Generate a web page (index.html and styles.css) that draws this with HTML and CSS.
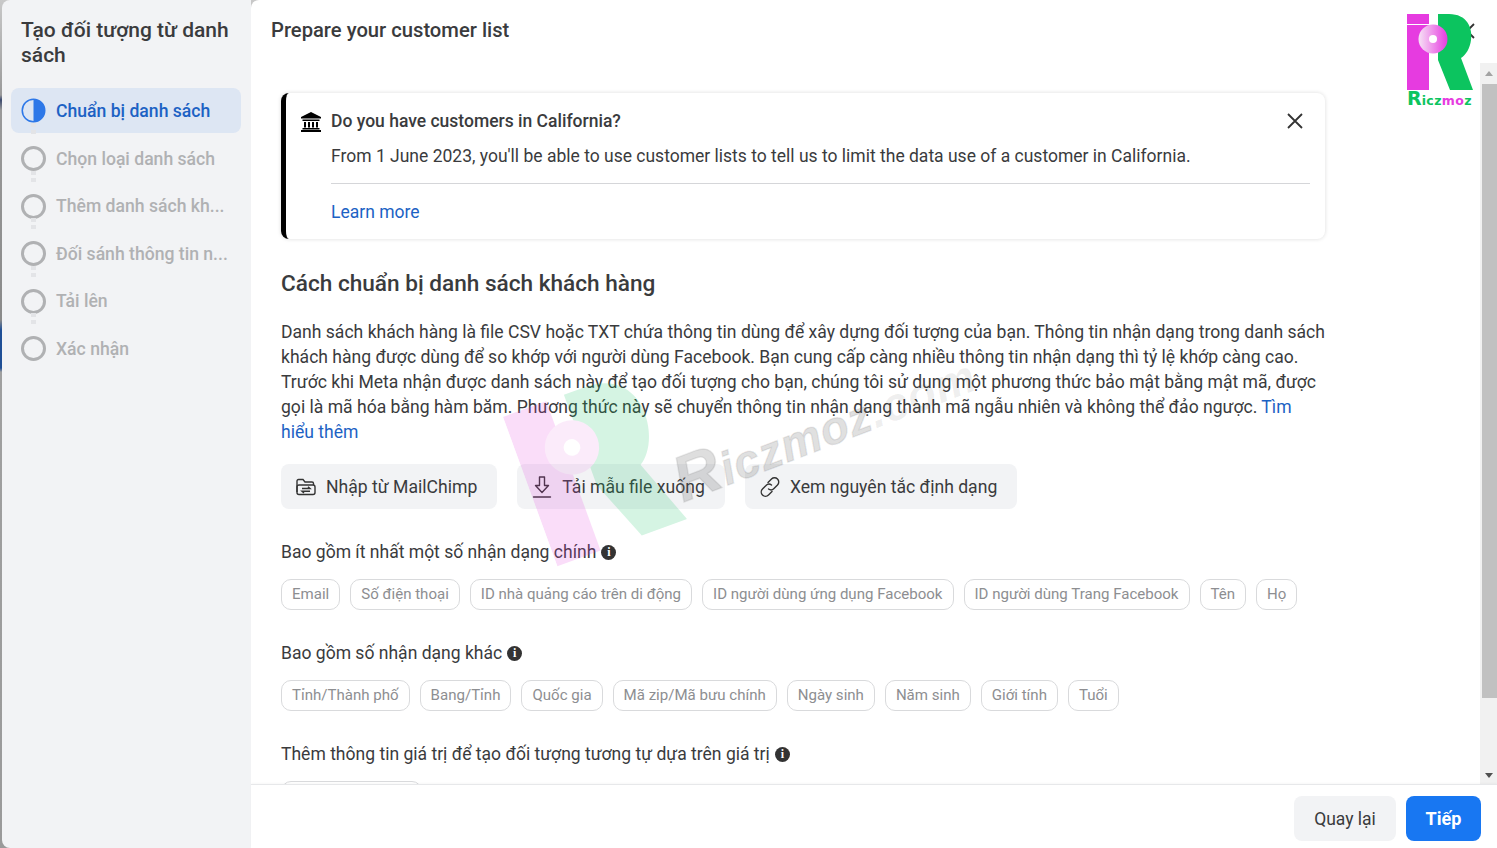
FILE: index.html
```html
<!DOCTYPE html>
<html lang="vi">
<head>
    <meta charset="UTF-8">
    <title>Tạo đối tượng từ danh sách</title>
    <link rel="stylesheet" href="styles.css">
</head>
<body>
<div class="backdrop">
    <div class="sidebar">
        <h1 class="side-title">Tạo đối tượng từ danh sách</h1>
        <ul class="steps">
            <li class="step active">
                <svg class="step-icon" viewBox="0 0 26 26"><circle cx="13" cy="13" r="11.7" fill="none" stroke="#2d78e8" stroke-width="1.6"/><path d="M13 1.3a11.7 11.7 0 0 1 0 23.4z" fill="#2d78e8"/></svg>
                <span>Chuẩn bị danh sách</span>
            </li>
            <li class="step"><span class="ring"></span><span>Chọn loại danh sách</span></li>
            <li class="step"><span class="ring"></span><span>Thêm danh sách kh...</span></li>
            <li class="step"><span class="ring"></span><span>Đối sánh thông tin n...</span></li>
            <li class="step"><span class="ring"></span><span>Tải lên</span></li>
            <li class="step"><span class="ring"></span><span>Xác nhận</span></li>
        </ul>
    </div>

    <div class="main">
        <div class="main-header">Prepare your customer list</div>

        <div class="main-body">
            <div class="content">
                <div class="notice">
                    <svg class="bank-icon" viewBox="0 0 20 20"><path d="M10 0 L20 5 V6.5 H0 V5z M1.5 7.5 H18.5 V9 H1.5z M3 10 H5 V15.5 H3z M7 10 H9 V15.5 H7z M11 10 H13 V15.5 H11z M15 10 H17 V15.5 H15z M1.5 16 H18.5 V17.5 H1.5z M0 18 H20 V20 H0z" fill="#000"/></svg>
                    <div class="notice-text">
                        <div class="notice-title">Do you have customers in California?</div>
                        <p class="notice-desc">From 1 June 2023, you'll be able to use customer lists to tell us to limit the data use of a customer in California.</p>
                        <div class="notice-foot"><a href="#">Learn more</a></div>
                    </div>
                    <svg class="notice-close" viewBox="0 0 16 16"><path d="M1 1 L15 15 M15 1 L1 15" stroke="#333" stroke-width="1.8" fill="none"/></svg>
                </div>

                <h2 class="section-title">Cách chuẩn bị danh sách khách hàng</h2>
                <p class="intro">Danh sách khách hàng là file CSV hoặc TXT chứa thông tin dùng để xây dựng đối tượng của bạn. Thông tin nhận dạng trong danh sách khách hàng được dùng để so khớp với người dùng Facebook. Bạn cung cấp càng nhiều thông tin nhận dạng thì tỷ lệ khớp càng cao. Trước khi Meta nhận được danh sách này để tạo đối tượng cho bạn, chúng tôi sử dụng một phương thức bảo mật bằng mật mã, được gọi là mã hóa bằng hàm băm. Phương thức này sẽ chuyển thông tin nhận dạng thành mã ngẫu nhiên và không thể đảo ngược. <a href="#">Tìm hiểu thêm</a></p>

                <div class="actions">
                    <button class="btn">
                        <svg class="btn-icon" viewBox="0 0 20 20" fill="none" stroke="#333" stroke-width="1.4"><path d="M1 15V4A1.500 1.500 0 0 1 2.500 2.500H7l2 2.500h7A1.500 1.500 0 0 1 17.500 6.500V8"/><path d="M1 15.500A2 2 0 0 0 3 17.500h14a2 2 0 0 0 2-2V10a2 2 0 0 0-2-2H3a2 2 0 0 0-2 2z"/><path d="M6 11.500h8l-2-1.700M14 14.200H6l2 1.700"/></svg>
                        Nhập từ MailChimp
                    </button>
                    <button class="btn">
                        <svg class="btn-icon" viewBox="0 0 20 20" fill="none" stroke="#333" stroke-width="1.4"><path d="M7.500 0h5v8.500h4L10 15.500 3.500 8.500h4z" stroke-linejoin="round"/><path d="M1.500 20h17" stroke-linecap="round"/></svg>
                        Tải mẫu file xuống
                    </button>
                    <button class="btn">
                        <svg class="btn-icon" viewBox="0 0 20 20" fill="none" stroke="#333" stroke-width="1.4" stroke-linecap="round"><path d="M8 5.500l3.500-3.500a4.200 4.200 0 0 1 6 6l-3.500 3.500a4.200 4.200 0 0 1-5.500.5"/><path d="M12 14.500l-3.500 3.500a4.200 4.200 0 0 1-6-6l3.500-3.500a4.200 4.200 0 0 1 5.500-.5"/></svg>
                        Xem nguyên tắc định dạng
                    </button>
                </div>

                <div class="group-label">Bao gồm ít nhất một số nhận dạng chính <span class="info">i</span></div>
                <div class="chips">
                    <span class="chip">Email</span>
                    <span class="chip">Số điện thoại</span>
                    <span class="chip">ID nhà quảng cáo trên di động</span>
                    <span class="chip">ID người dùng ứng dụng Facebook</span>
                    <span class="chip">ID người dùng Trang Facebook</span>
                    <span class="chip">Tên</span>
                    <span class="chip">Họ</span>
                </div>

                <div class="group-label">Bao gồm số nhận dạng khác <span class="info">i</span></div>
                <div class="chips">
                    <span class="chip">Tỉnh/Thành phố</span>
                    <span class="chip">Bang/Tỉnh</span>
                    <span class="chip">Quốc gia</span>
                    <span class="chip">Mã zip/Mã bưu chính</span>
                    <span class="chip">Ngày sinh</span>
                    <span class="chip">Năm sinh</span>
                    <span class="chip">Giới tính</span>
                    <span class="chip">Tuổi</span>
                </div>

                <div class="group-label">Thêm thông tin giá trị để tạo đối tượng tương tự dựa trên giá trị <span class="info">i</span></div>
                <div class="chips">
                    <span class="chip chip-blank"></span>
                </div>
            </div>

            <div class="scrollbar">
                <div class="arrow-up"></div>
                <div class="thumb"></div>
                <div class="arrow-down"></div>
            </div>
        </div>

        <div class="main-footer">
            <button class="foot-btn back">Quay lại</button>
            <button class="foot-btn next">Tiếp</button>
        </div>
    </div>
</div>

<!-- watermark over the page -->
<div class="watermark">
    <svg class="wm-mark" viewBox="0 0 66 76">
        <rect x="0" y="0" width="22" height="76" fill="#e63be0"/>
        <path d="M31 0 H42 C60 0 66 14 64 26 C63 34 59 41 54 44 L66 76 H43 L31 46z" fill="#0cc45f"/>
        <circle cx="26" cy="25" r="13" fill="#eb8fe6"/>
        <circle cx="26" cy="25" r="4" fill="#fff"/>
    </svg>
    <span class="wm-word"><span class="wm-cap">R</span>iczmoz<span class="wm-tld">.com</span></span>
</div>

<!-- corner logo, sits on top of the dialog close -->
<svg class="dialog-close" viewBox="0 0 16 16"><path d="M1 1 L15 15 M15 1 L1 15" stroke="#333" stroke-width="1.800" fill="none"/></svg>
<div class="logo">
    <svg class="logo-mark" viewBox="0 0 66 76">
        <defs><linearGradient id="disc"><stop offset="0" stop-color="#f6e2f5"/><stop offset="1" stop-color="#e63be0"/></linearGradient></defs>
        <rect x="0" y="0" width="22" height="76" fill="#e63be0"/>
        <rect x="0" y="10" width="22" height="1" fill="#fff"/>
        <path d="M31 0 H42 C60 0 66 14 64 26 C63 34 59 41 54 44 L66 76 H43 L31 46z" fill="#0cc45f"/>
        <circle cx="26" cy="25" r="14.500" fill="url(#disc)"/>
        <circle cx="26" cy="25" r="4" fill="#fff"/>
    </svg>
    <div class="logo-word"><b>R</b>icz<span class="m">m</span><span class="o">o</span>z</div>
</div>
</body>
</html>
```

FILE: styles.css
```css
* {
    box-sizing: border-box;
}

html, body {
    margin: 0;
    height: 100%;
    overflow: hidden;
}

body {
    font-family: Roboto, "Liberation Sans", sans-serif;
    color: #3a3b3d;
    background-color: #fff;
    position: relative;
}

a {
    color: #1c62c4;
    text-decoration: none;
}

button {
    font-family: inherit;
    border: none;
}

/* what shows of the page behind the dialog, only a sliver at the left edge */
.backdrop {
    display: flex;
    height: 848px;
    padding-left: 2px;
    background: linear-gradient(#c9c9c9 0, #9a9a9a 95px, #3c4a6e 100px, #9a9a9a 110px, #8a8a8a 320px, #1f4f96 330px, #1f4f96 368px, #a0a0a0 372px, #9a9a9a 848px);
}

/* Left step list */
.sidebar {
    width: 249px;
    flex-shrink: 0;
    background-color: #f2f3f5;
    border-radius: 8px 0 0 8px;
    padding: 18px 10px 0 9px;
}

.side-title {
    margin: 0 0 20px 10px;
    font-size: 21px;
    line-height: 25px;
    font-weight: 500;
    color: #3a3b3d;
}

.steps {
    list-style: none;
    margin: 0;
    padding: 0;
}

.step {
    display: flex;
    align-items: center;
    gap: 10px;
    height: 47.500px;
    padding-left: 10px;
    font-size: 17.600px;
    font-weight: 500;
    color: #b0b1b3;
    white-space: nowrap;
    position: relative;
}

.step:first-child {
    height: 45px;
    margin-bottom: 2px;
}

/* dotted connector between steps */
.step + .step::before {
    content: "";
    position: absolute;
    left: 20px;
    top: -12px;
    width: 5px;
    height: 11px;
    background: repeating-linear-gradient(#e3e4e7 0, #e3e4e7 4px, transparent 4px, transparent 7px);
}

.step.active {
    background-color: #dde6f3;
    border-radius: 8px;
    color: #1c62c4;
}

.step-icon, .ring {
    width: 25px;
    height: 25px;
    flex-shrink: 0;
}

.ring {
    border: 3px solid #b0b1b3;
    border-radius: 50%;
}

/* Right panel */
.main {
    flex: 1;
    display: flex;
    flex-direction: column;
    background-color: #fff;
    border-radius: 8px 0 0 0;
    min-width: 0;
}

.main-header {
    height: 63px;
    flex-shrink: 0;
    padding: 18px 20px 0 20px;
    font-size: 20.200px;
    line-height: 25px;
    font-weight: 500;
}

.main-body {
    flex: 1;
    display: flex;
    min-height: 0;
}

.content {
    flex: 1;
    overflow: hidden;
    padding: 30px 155px 0 30px;
    min-width: 0;
}

.notice {
    display: flex;
    align-items: flex-start;
    height: 146px;
    border-left: 5px solid #000;
    border-radius: 8px;
    background-color: #fff;
    box-shadow: 0 0 4px rgba(0, 0, 0, 0.14);
    padding: 16px 15px 0 15px;
}

.bank-icon {
    width: 20px;
    height: 20px;
    margin-top: 3px;
    flex-shrink: 0;
}

.notice-text {
    flex: 1;
    margin-left: 10px;
    margin-right: -23px;
}

.notice-title {
    font-size: 17.500px;
    line-height: 24px;
    font-weight: 500;
}

.notice-desc {
    margin: 11px 0 0 0;
    font-size: 17.500px;
    line-height: 24px;
}

.notice-foot {
    margin-top: 15px;
    padding-top: 16px;
    border-top: 1px solid #d5d6d9;
    font-size: 17.500px;
    line-height: 24px;
}

.notice-close {
    width: 16px;
    height: 16px;
    margin-top: 4px;
    margin-right: 7px;
    flex-shrink: 0;
    position: relative;
}

.section-title {
    margin: 30px 0 0 0;
    font-size: 22.600px;
    line-height: 30px;
    font-weight: 500;
}

.intro {
    margin: 21px -2px 0 0;
    font-size: 17.570px;
    line-height: 25px;
}

.actions {
    display: flex;
    gap: 20px;
    margin-top: 19px;
}

.btn {
    display: flex;
    align-items: center;
    gap: 10px;
    height: 45px;
    padding: 0 20px 0 15px;
    background-color: #f2f3f5;
    border-radius: 8px;
    font-size: 17.600px;
    color: #3a3b3d;
}

.btn-icon {
    width: 20px;
    height: 20px;
    flex-shrink: 0;
    overflow: visible;
}

.group-label {
    display: flex;
    align-items: center;
    gap: 5px;
    height: 25px;
    margin-top: 31px;
    font-size: 17.550px;
    line-height: 25px;
}

.info {
    width: 15px;
    height: 15px;
    border-radius: 50%;
    background-color: #333;
    color: #fff;
    font-size: 12px;
    font-weight: 700;
    line-height: 15px;
    text-align: center;
    font-family: "Liberation Serif", serif;
}

.chips {
    display: flex;
    gap: 10px;
    margin-top: 14px;
}

.chip {
    height: 31px;
    padding: 0 10px;
    border: 1px solid #d9dadc;
    border-radius: 10px;
    font-size: 15.050px;
    line-height: 28px;
    color: #8d8e91;
    white-space: nowrap;
}

/* only its top edge shows above the footer */
.chip-blank {
    width: 141px;
}

/* the scrollbar is drawn, the panel itself does not scroll */
.scrollbar {
    width: 17px;
    flex-shrink: 0;
    display: flex;
    flex-direction: column;
    background-color: #f1f1f1;
}

.thumb {
    height: 614px;
    margin: 0 0 0 2px;
    background-color: #c1c1c1;
}

.arrow-up, .arrow-down {
    height: 21px;
    display: flex;
    align-items: center;
    justify-content: center;
    flex-shrink: 0;
}

.arrow-down {
    margin-top: auto;
    height: 17px;
}

.arrow-up::before {
    content: "";
    border: 4.500px solid transparent;
    border-top: none;
    border-bottom: 5px solid #a3a3a3;
}

.arrow-down::before {
    content: "";
    border: 4.500px solid transparent;
    border-bottom: none;
    border-top: 5px solid #505050;
}

.main-footer {
    height: 64px;
    flex-shrink: 0;
    display: flex;
    justify-content: flex-end;
    align-items: flex-start;
    gap: 10px;
    padding: 11px 16px 0 0;
    border-top: 1px solid #e7e8ea;
    background-color: #fff;
    box-shadow: 0 -1px 2px rgba(0, 0, 0, 0.03);
    position: relative;
}

.foot-btn {
    height: 45px;
    border-radius: 8px;
    font-size: 17.500px;
}

.foot-btn.back {
    width: 102px;
    background-color: #f2f3f5;
    color: #3a3b3d;
}

.foot-btn.next {
    width: 75px;
    background-color: #1877f2;
    color: #fff;
    font-weight: 700;
    font-size: 18px;
}

/* Overlays */
.watermark {
    position: absolute;
    left: 505px;
    top: 380px;
    width: 480px;
    height: 190px;
    pointer-events: none;
}

.wm-mark {
    position: absolute;
    left: 21px;
    top: 8px;
    width: 138px;
    height: 160px;
    opacity: 0.17;
    transform: rotate(-20deg);
}

.wm-word {
    position: absolute;
    left: 170px;
    top: 65px;
    font-family: "Liberation Sans", sans-serif;
    font-size: 46px;
    font-weight: 700;
    font-style: italic;
    letter-spacing: 1px;
    white-space: nowrap;
    color: rgba(90, 90, 90, 0.2);
    -webkit-text-stroke: 1.500px rgba(90, 90, 90, 0.12);
    transform: rotate(-21deg);
    transform-origin: left center;
}

.wm-cap {
    font-size: 64px;
}

.wm-tld {
    color: rgba(90, 90, 90, 0.1);
    -webkit-text-stroke: 0;
}

.dialog-close {
    position: absolute;
    left: 1459px;
    top: 23px;
    width: 16px;
    height: 16px;
}

.logo {
    position: absolute;
    left: 1407px;
    top: 14px;
    width: 66px;
}

.logo-mark {
    display: block;
    width: 66px;
    height: 76px;
}

.logo-word {
    margin-top: 0;
    font-family: "DejaVu Sans", sans-serif;
    font-size: 12.500px;
    line-height: 17px;
    font-weight: 700;
    color: #0cc45f;
    white-space: nowrap;
    letter-spacing: 0.4px;
}

.logo-word b {
    font-size: 19px;
    letter-spacing: 0;
}

.logo-word .m, .logo-word .o {
    color: #e63be0;
}
```
